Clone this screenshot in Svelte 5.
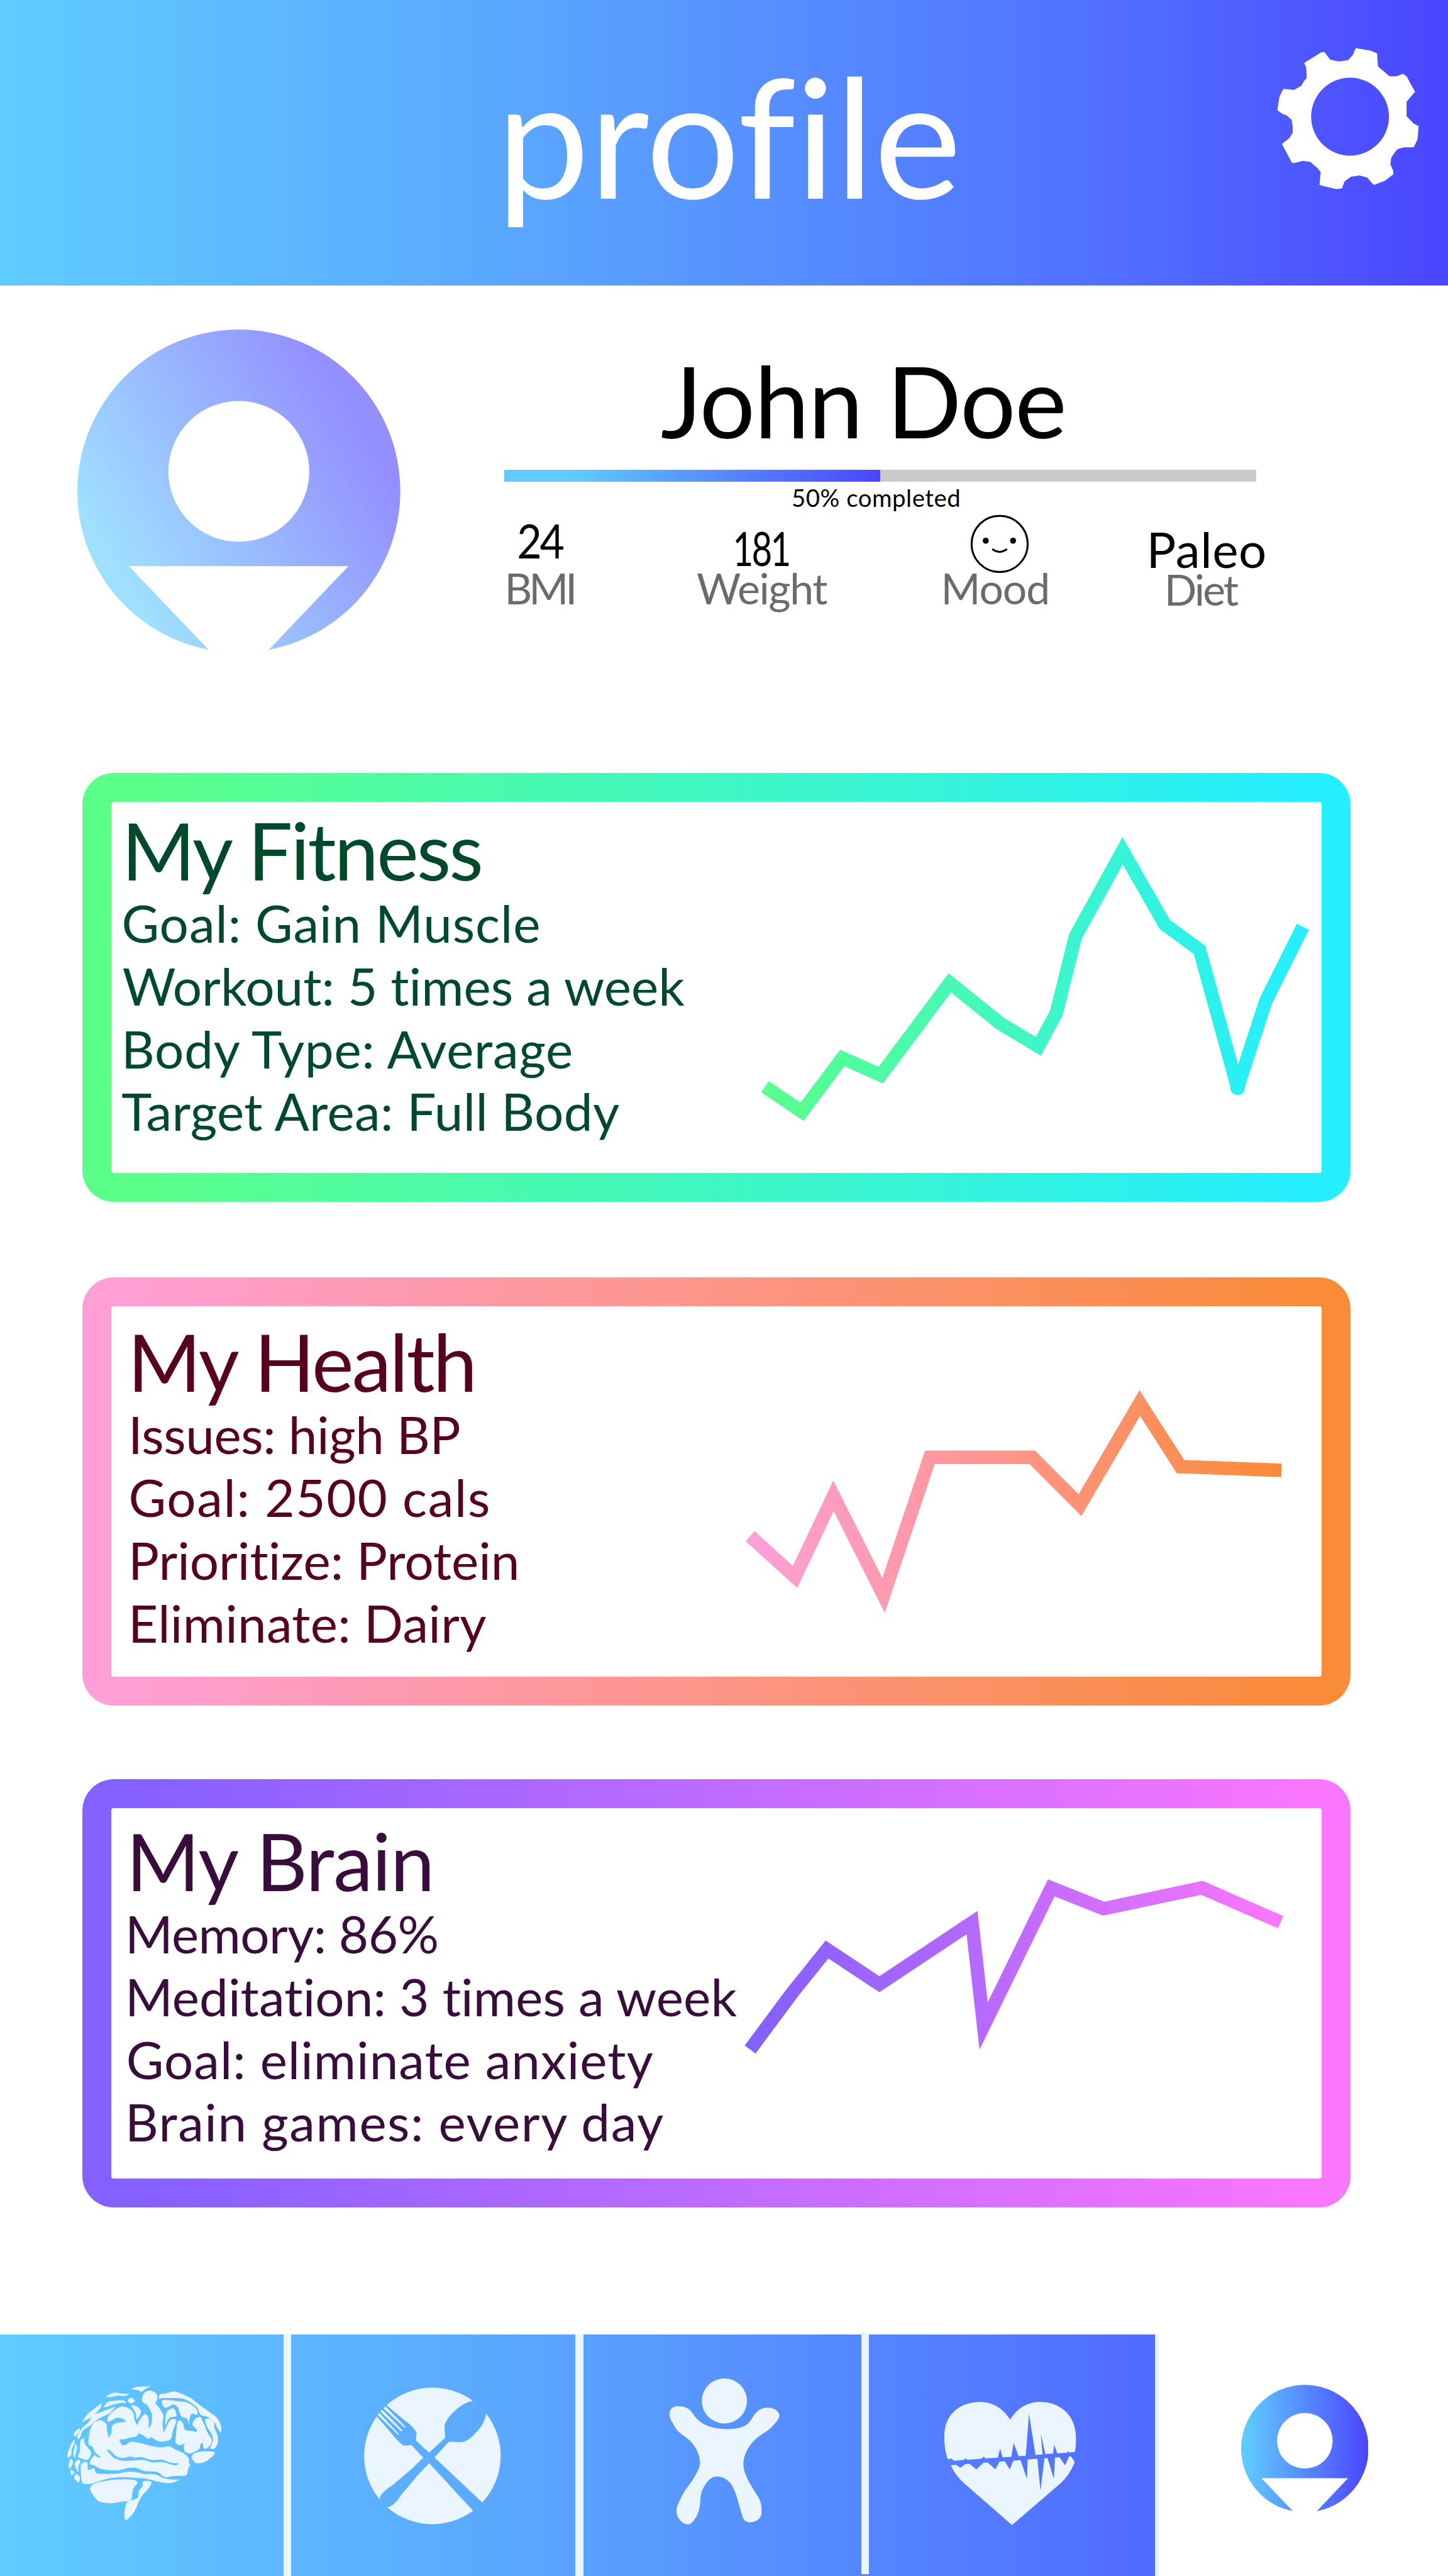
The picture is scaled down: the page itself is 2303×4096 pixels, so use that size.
<script>
  // 1rem is 100 design units; the design is 3125 units wide.
  const UNIT = 100;

  // Fits a line of text so that its ink spans [left, left + width] design units,
  // by tracking it, or by condensing it where tracking would make glyphs collide.
  function track(node, { left = 0, width, condense = false }) {
    const style = getComputedStyle(node);
    const rem = parseFloat(getComputedStyle(document.documentElement).fontSize);
    const px = (n) => (n / UNIT) * rem;
    const ctx = document.createElement('canvas').getContext('2d');
    ctx.font = `${style.fontStyle} ${style.fontWeight} ${style.fontSize} ${style.fontFamily}`;
    ctx.letterSpacing = '0.01px';
    const text = node.textContent.trim();
    const m = ctx.measureText(text);
    const ink = m.actualBoundingBoxLeft + m.actualBoundingBoxRight;
    node.style.width = `${px(left + width)}px`;
    node.style.textIndent = `${px(left) + m.actualBoundingBoxLeft}px`;
    if (condense) {
      const spacing = -0.05 * parseFloat(style.fontSize);
      const tracked = ink + spacing * (text.length - 1);
      node.style.letterSpacing = `${spacing}px`;
      node.style.transform = `scaleX(${px(width) / tracked})`;
    } else {
      node.style.letterSpacing = `${(px(width) - ink) / (text.length - 1)}px`;
    }
  }

  // Closed smooth outline through a list of "x,y" points.
  function blob(list) {
    const p = list.trim().split(/\s+/).map((s) => s.split(',').map(Number));
    const n = p.length;
    let d = `M${p[0]}`;
    for (let i = 0; i < n; i++) {
      const [a, b, c, e] = [p[(i + n - 1) % n], p[i], p[(i + 1) % n], p[(i + 2) % n]];
      d += `C${b[0] + (c[0] - a[0]) / 7},${b[1] + (c[1] - a[1]) / 7} ${c[0] - (e[0] - b[0]) / 7},${c[1] - (e[1] - b[1]) / 7} ${c[0]},${c[1]}`;
    }
    return d + 'Z';
  }

  // Titles and lines are [text, left, width] in design units.
  const cards = [
    {
      id: 'fitness', title: ['My Fitness', 37, 764], from: '#5aff8a', to: '#25eeff', top: 1730.5, end: 2815,
      lines: [['Goal: Gain Muscle', 26, 897], ['Workout: 5 times a week', 25, 1215], ['Body Type: Average', 31, 972], ['Target Area: Full Body', 23, 1077]],
      paths: ['1651,2345 1731,2399 1818,2283 1901,2320 2050,2121 2158,2208 2241,2258 2280,2186 2321,2021 2423,1836 2514,1995 2589,2050 2671,2347', '2671,2347 2732,2160 2812,2000'],
      dot: [2671, 2347]
    },
    {
      id: 'health', title: ['My Health', 50, 734], from: '#ff9fd5', to: '#fa8b39', top: 2818, end: 2766,
      lines: [['Issues: high BP', 46, 705], ['Goal: 2500 cals', 41, 773], ['Prioritize: Protein', 46, 829], ['Eliminate: Dairy', 46, 763]],
      paths: ['1619,3314 1716,3402 1799,3227 1907,3442 2007,3144 2228,3144 2331,3247 2460,3027 2548,3164 2766,3172']
    },
    {
      id: 'brain', title: ['My Brain', 47, 645], from: '#8460ff', to: '#f976ff', top: 3901, end: 2766,
      lines: [['Memory: 86%', 39, 663], ['Meditation: 3 times a week', 39, 1314], ['Goal: eliminate anxiety', 36, 1133], ['Brain games: every day', 39, 1155]],
      paths: ['1619,4422 1708,4302 1785,4206 1898,4281 2098,4148 2123,4371 2269,4073 2382,4118 2594,4073 2764,4147']
    }
  ];

  const cortex =
    blob('338,316 345,278 385,240 430,218 480,232 506,262 511,300 530,339 530,339 548,302 580,266 600,283 605,318 603,359 603,359 622,330 624,265 594,206 594,206 566,188 562,160 580,126 612,115 648,128 662,160 648,197 648,197 672,225 699,275 694,330 701,388 701,388 722,345 740,310 765,297 784,312 764,365 752,418 735,436 680,446 645,432 622,417 598,425 570,405 538,392 538,392 525,412 490,417 440,430 413,430 413,430 431,469 431,469 455,466 490,446 540,452 600,468 680,482 740,476 780,498 830,520 862,550 866,585 873,597 860,620 855,650 838,666 770,667 710,675 660,642 580,636 520,615 470,616 410,630 340,629 290,620 255,600 224,590 232,558 255,533 272,545 299,546 299,546 262,520 240,478 215,460 222,385 245,330 290,306 330,330 334,370 346,420 346,420 363,390 368,345 395,325 458,315 458,315 440,298 400,290 370,305') +
    blob('331,498 331,498 355,503 395,540 440,551 485,541 520,549 560,545 620,563 690,562 750,582 806,586 806,586 770,598 700,578 625,579 570,563 500,568 430,568 380,550 350,520');

  const folds = [
    '496,105 530,91 616,88 616,88 585,103 558,122 540,113',
    '331,152 380,128 430,134 476,136 450,150 410,148 370,155 345,158',
    '310,224 310,224 340,188 385,180 440,178 458,196 430,193 380,204 340,218',
    '468,180 490,161 515,180 492,198',
    '301,195 301,195 290,230 235,285 172,318 172,318 215,262',
    '391,218 391,218 350,262 280,298 230,338 178,375 160,418 144,428 144,408 175,356 215,320 245,275 300,252',
    '158,359 152,388 124,412 124,385',
    '125,433 122,460 106,495 103,530 80,548 82,515 103,460',
    '131,459 140,480 133,520 125,548 117,520',
    '200,421 186,428 195,465 232,515 208,562 146,544 146,544 160,500 164,436',
    '100,555 114,580 95,618 85,600',
    '150,561 161,576 150,605 147,641 125,590',
    '100,627 124,645 103,662',
    '135,654 158,675 152,710 122,682',
    '190,577 207,582 210,620 217,629 252,618 265,649 330,654 400,652 460,641 520,642 580,655 650,658 710,684 760,691 804,690 804,690 775,706 725,714 660,703 590,685 520,680 430,675 340,685 260,709 210,720 172,704 165,600',
    '530,705 527,722 502,755 496,808 480,828 430,833 360,845 280,830 240,785 225,750 250,718 330,698 430,689 505,692',
    '568,702 622,705 605,745 555,805 510,900 459,953 447,920 460,845 490,826 535,807 540,765 565,735',
    '493,211 535,222 554,255 528,302 520,260',
    '673,168 675,140 720,132 765,120 810,132 880,165 930,205 1000,255 1050,295 1074,350 1070,384 1050,360 1030,320 985,285 940,270 915,222 860,182 820,166 740,163 690,163',
    '690,180 740,177 800,184 850,190 900,220 921,250 915,272 884,265 870,290 864,339 864,339 854,298 820,285 803,255 795,225 765,205 720,225 700,218',
    '719,257 765,229 784,278 738,292 711,345 711,345',
    '805,306 825,325 840,368 880,375 914,384 914,384 915,365 888,335 905,300 938,285 960,325 985,385 1012,430 1005,465 975,492 958,482 955,455 940,462 930,495 875,521 840,510 832,480 838,458 838,458 805,467 778,450 782,395 790,325',
    '970,303 1000,298 1027,320 1030,355 1050,405 1052,455 1030,490 1000,491 1000,491 1020,440 1012,395 985,355',
    '882,550 900,520 960,508 1030,512 1018,540 960,580 910,583'
  ].map(blob);
</script>

{#snippet avatar(id)}
  <svg class="avatar {id}" viewBox="0 0 697 760" aria-hidden="true">
    <defs>
      <linearGradient id="g-soft" gradientUnits="userSpaceOnUse" x1="70" y1="500" x2="600" y2="190">
        <stop offset="0" stop-color="#9fe0ff" /><stop offset="1" stop-color="#938fff" />
      </linearGradient>
      <linearGradient id="g-bold" gradientUnits="userSpaceOnUse" x1="20" y1="0" x2="697" y2="0">
        <stop offset="0" stop-color="#60cbff" /><stop offset="1" stop-color="#4b45ff" />
      </linearGradient>
    </defs>
    <circle cx="348.5" cy="348.5" r="348.5" fill="url(#g-{id})" />
    <circle cx="348.5" cy="306" r="152" fill="#fff" />
    <path d="M111 510.500H585L348.500 759Z" fill="#fff" />
  </svg>
{/snippet}

<main>
  <header>
    <h1 use:track={{ width: 971 }}>profile</h1>
    <svg class="gear" viewBox="0 0 1275 1140" aria-label="Settings">
      <path fill="#fff" fill-rule="evenodd" d="M677,132 773,149 815,166 821,251 896,314 941,314 983,298 1006,315 1061,415 1006,479 1006,573 1052,621 1084,637 1077,723 1052,775 992,775 957,783 941,792 907,841 901,884 920,927 920,950 867,990 801,1016 790,1016 751,970 701,957 646,965 604,995 588,1040 552,1045 454,1022 442,1017 450,935 428,908 383,869 336,862 278,876 263,873 199,753 245,717 269,681 269,642 262,596 230,568 198,556 169,533 182,451 201,409 210,396 277,403 324,377 341,347 358,328 359,298 355,254 343,228 457,158 474,158 512,208 569,219 626,211 657,178ZM892,576A252,252 0 1 0 388,576A252,252 0 1 0 892,576Z" />
    </svg>
  </header>

  <section class="profile">
    {@render avatar('soft')}
    <div class="details">
      <h2 use:track={{ left: 339, width: 868 }}>John Doe</h2>
      <div class="progress"><div class="done"></div></div>
      <p class="completed" use:track={{ left: 623, width: 359 }}>50% completed</p>
      <div class="stats">
        <div class="stat bmi">
          <p class="value" use:track={{ width: 97, condense: true }}>24</p>
          <p class="label" use:track={{ width: 141 }}>BMI</p>
        </div>
        <div class="stat weight">
          <p class="value" use:track={{ width: 115, condense: true }}>181</p>
          <p class="label" use:track={{ width: 281 }}>Weight</p>
        </div>
        <div class="stat mood">
          <svg class="face" viewBox="0 0 130 130" aria-label="Good">
            <circle cx="65" cy="65" r="60.500" fill="none" stroke="#000" stroke-width="4" />
            <circle cx="35" cy="58" r="6.500" /><circle cx="94" cy="58" r="6.500" />
            <path d="M49 76Q65 88 81 76" fill="none" stroke="#000" stroke-width="4" />
          </svg>
          <p class="label" use:track={{ width: 222 }}>Mood</p>
        </div>
        <div class="stat diet">
          <p class="value" use:track={{ width: 245 }}>Paleo</p>
          <p class="label" use:track={{ width: 152 }}>Diet</p>
        </div>
      </div>
    </div>
  </section>

  <section class="cards">
    {#each cards as card}
      <article class="card {card.id}">
        <div class="inner">
          <div class="text">
            <h3 use:track={{ left: card.title[1], width: card.title[2] }}>{card.title[0]}</h3>
            {#each card.lines as [text, left, width]}
              <p use:track={{ left, width }}>{text}</p>
            {/each}
          </div>
          <svg class="chart" viewBox="1600 {card.top} 1252.5 800" aria-hidden="true">
            <defs>
              <linearGradient id="line-{card.id}" gradientUnits="userSpaceOnUse" x1="1640" x2={card.end - 20} y1="0" y2="0">
                <stop offset="0" stop-color={card.from} /><stop offset="1" stop-color={card.to} />
              </linearGradient>
            </defs>
            {#each card.paths as points}
              <polyline {points} fill="none" stroke="url(#line-{card.id})" stroke-width="29" stroke-miterlimit="12" />
            {/each}
            {#if card.dot}
              <circle cx={card.dot[0]} cy={card.dot[1]} r="16" fill="url(#line-{card.id})" />
            {/if}
          </svg>
        </div>
      </article>
    {/each}
  </section>

  <nav>
    <div class="tab brain-tab">
      <svg class="brain-icon" viewBox="0 0 1140 1020" aria-label="Brain">
        <path fill-rule="evenodd" d={cortex} />
        {#each folds as d}<path {d} />{/each}
      </svg>
    </div>
    <i class="divider"></i>
    <div class="tab food-tab">
      <svg class="food-icon" viewBox="0 0 1200 1140" aria-label="Nutrition">
        <path d="M284,271A443,443 0 0 1 843,242C775,255 730,300 690,345C650,400 660,410 661,435C663,460 667,478 658,487L559,577 475,500C472,480 479,470 479,453C473,425 430,389 400,367Z" />
        <path d="M929,325A443,443 0 0 1 904,900L594,609 683,512Q690,505 715,507C760,511 790,515 830,480C880,435 920,390 929,325Z" />
        <path d="M560,645 844,954A443,443 0 0 1 289,931C320,930 360,885 380,850Q387,838 405,820L495,713Z" />
        <path d="M221,343 320,457C345,490 375,518 390,529C405,537 415,527 446,529L522,610 450,680 325,787C290,808 240,845 239,880A443,443 0 0 1 221,343Z" />
        <path d="M277,279 408,411 403,417 264,290ZM256,299 387,434 380,441 245,311ZM237,320 364,458 358,461 227,333Z" />
      </svg>
    </div>
    <i class="divider"></i>
    <div class="tab body-tab">
      <svg class="body-icon" viewBox="0 0 960 1140" aria-label="Body">
        <circle cx="493" cy="243" r="146" />
        <path d="M138,330C136,300 155,278 193,277C240,278 265,290 287,322C325,380 380,425 515,425C580,425 630,410 652,383C680,355 695,287 773,286C815,286 850,310 849,338C850,355 825,385 805,406C770,445 730,455 690,495C650,535 617,590 616,650C616,715 660,780 700,845C730,890 735,915 734,965C733,1000 705,1028 660,1028C635,1028 618,1015 612,995C590,930 575,850 545,795C525,755 480,732 445,732C400,732 365,780 345,835C335,870 340,900 330,945C318,990 290,1025 275,1037C260,1048 235,1040 220,1028C195,1008 183,985 183,955C184,920 205,885 225,845C255,795 285,765 305,725C320,695 335,675 335,640C335,590 305,535 270,500C235,465 205,460 175,415C165,400 160,390 155,380C142,360 140,350 138,330Z" />
      </svg>
    </div>
    <i class="divider raised"></i>
    <div class="tab heart-tab">
      <svg class="heart-icon" viewBox="0 0 1200 1080" aria-label="Health">
        <path d="M198,561C180,510 174,465 175,400C177,270 275,188 405,188C490,188 555,230 601,303C645,230 710,188 795,188C930,188 1028,280 1027,420C1028,460 1025,490 1019,513L982,515 975,507 969,517 906,521 886,465 879,522 829,526 799,393 811,528 765,531 723,266 702,536 656,539 623,453 609,543 552,547 536,490 521,549 442,554 428,542 415,556 323,563 313,554 298,564 238,569 218,554Z" />
        <path d="M217,598 250,595 279,615 310,591 338,589 382,625 428,582 456,580 505,625 532,575 566,572 598,625 622,568 668,565 710,687 714,561 777,556 797,762 823,553 843,552 884,687 891,549 920,546 957,598 982,541 995,540 1019,576C1000,630 965,680 930,712L613,985 300,712C265,680 235,640 217,598Z" />
      </svg>
    </div>
    <div class="tab current">{@render avatar('bold')}</div>
  </nav>
</main>

<style>
  :global(html) {
    font-size: calc(100vw / 31.25);
  }
  :global(body) {
    margin: 0;
    background: #fff;
  }
  main {
    --sky: linear-gradient(90deg, #60cbff 1%, #5aa5ff 37%, #506aff 80%, #4b45ff 100%);
    display: flex;
    flex-direction: column;
    width: 31.25rem;
    height: 100vh;
    overflow: hidden;
    font-family: Lato, 'Liberation Sans', sans-serif;
    background: #fff;
  }
  h1, h2, h3, p {
    margin: 0;
    font-weight: 400;
    white-space: nowrap;
    line-height: 1;
  }
  svg {
    display: block;
    flex: none;
  }
  header {
    display: flex;
    box-sizing: border-box;
    flex: none;
    height: 6.16rem;
    padding: 0.6rem 0 0 10.94rem;
    color: #fff;
    background: var(--sky);
  }
  h1 {
    margin-top: 0.53rem;
    font-size: 3.58rem;
  }
  .gear {
    width: 4.25rem;
    height: 3.8rem;
    margin-left: auto;
  }
  .profile {
    display: flex;
    box-sizing: border-box;
    flex: none;
    height: 10.52rem;
    padding: 0.945rem 0 0 1.675rem;
  }
  .avatar.soft {
    width: 6.97rem;
    height: 7.6rem;
  }
  .details {
    display: flex;
    flex-direction: column;
    width: 16.8rem;
    margin: 0.485rem 0 0 2.235rem;
  }
  h2 {
    font-size: 2.12rem;
  }
  .progress {
    flex: none;
    width: 16.23rem;
    height: 0.26rem;
    margin-top: 0.42rem;
    background: #cacaca;
  }
  .done {
    width: 50%;
    height: 100%;
    background: linear-gradient(90deg, #60cbff 18%, #4b45ff 100%);
  }
  .completed {
    margin-top: 0.08rem;
    font-size: 0.52rem;
  }
  .stats {
    display: flex;
    align-items: flex-end;
    height: 2.154rem;
    padding-left: 0.09rem;
  }
  .stat {
    display: flex;
    flex-direction: column;
    align-items: center;
  }
  .value {
    font-size: 1.02rem;
    line-height: 0.8;
    transform-origin: 0 50%;
  }
  .label {
    font-size: 0.92rem;
    color: #6b6b6b;
  }
  .bmi {
    width: 1.41rem;
    margin-right: 2.67rem;
  }
  .bmi .value {
    margin-bottom: 0.16rem;
  }
  .weight {
    width: 2.81rem;
    margin-right: 2.53rem;
  }
  .mood {
    width: 2.22rem;
    margin-right: 2.23rem;
  }
  .face {
    width: 1.3rem;
    height: 1.3rem;
    margin: 0 -0.14rem -0.165rem 0;
  }
  .diet {
    width: 2.45rem;
    margin-bottom: -0.03rem;
  }
  .diet .value {
    font-size: 1.06rem;
    margin-bottom: -0.02rem;
  }
  .diet .label {
    margin-right: 0.19rem;
  }
  .cards {
    display: flex;
    flex: none;
    flex-direction: column;
    gap: 1.6rem;
    width: 27.37rem;
    height: 33.69rem;
    margin-left: 1.78rem;
  }
  .card {
    box-sizing: border-box;
    height: 9.25rem;
    padding: 0.625rem;
    border-radius: 0.68rem;
  }
  .inner {
    display: flex;
    height: 8rem;
    border-radius: 0.05rem;
    background: #fff;
  }
  .fitness {
    color: #00492a;
    background: linear-gradient(90deg, #5aff8a 5%, #25eeff 97%);
  }
  .health {
    margin-top: 0.025rem;
    color: #57001f;
    background: linear-gradient(90deg, #ff9fd5 3%, #fa8b39 97%);
  }
  .brain {
    margin-top: -0.02rem;
    color: #380d3c;
    background: linear-gradient(90deg, #8460ff 3%, #f976ff 97%);
  }
  .text {
    box-sizing: border-box;
    flex: none;
    width: 13.595rem;
    padding-top: 0.19rem;
  }
  .health .text {
    padding-top: 0.35rem;
  }
  .brain .text {
    padding-top: 0.29rem;
  }
  h3 {
    margin-bottom: 0.04rem;
    font-size: 1.71rem;
  }
  .text p {
    font-size: 1.11rem;
    line-height: 1.353rem;
  }
  .chart {
    width: 12.525rem;
    height: 8rem;
  }
  nav {
    display: flex;
    flex: none;
    height: 5.21rem;
    fill: #eaf5ff;
    background: var(--sky);
  }
  .tab {
    box-sizing: border-box;
    flex: none;
  }
  .divider {
    flex: none;
    width: 0.168rem;
    background: #eaf5ff;
  }
  .raised {
    transform: translateY(-0.04rem);
  }
  .brain-tab {
    width: 6.12rem;
    padding: 0.83rem 0 0 1.2rem;
  }
  .food-tab {
    width: 6.13rem;
    padding: 0.63rem 0 0 1.11rem;
  }
  .body-tab {
    width: 6rem;
    padding: 0.63rem 0 0 1.41rem;
  }
  .heart-tab {
    width: 6.25rem;
    padding: 0.83rem 0 0 1.05rem;
    border-right: 0.085rem solid #eaf5ff;
  }
  .current {
    flex: 1;
    padding: 1.085rem 0 0 1.78rem;
    background: #fff;
  }
  .brain-icon {
    width: 3.8rem;
    height: 3.4rem;
  }
  .food-icon {
    width: 4rem;
    height: 3.8rem;
  }
  .body-icon {
    width: 3.2rem;
    height: 3.8rem;
  }
  .heart-icon {
    width: 4rem;
    height: 3.6rem;
  }
  .avatar.bold {
    width: 2.75rem;
    height: 3rem;
  }
</style>
